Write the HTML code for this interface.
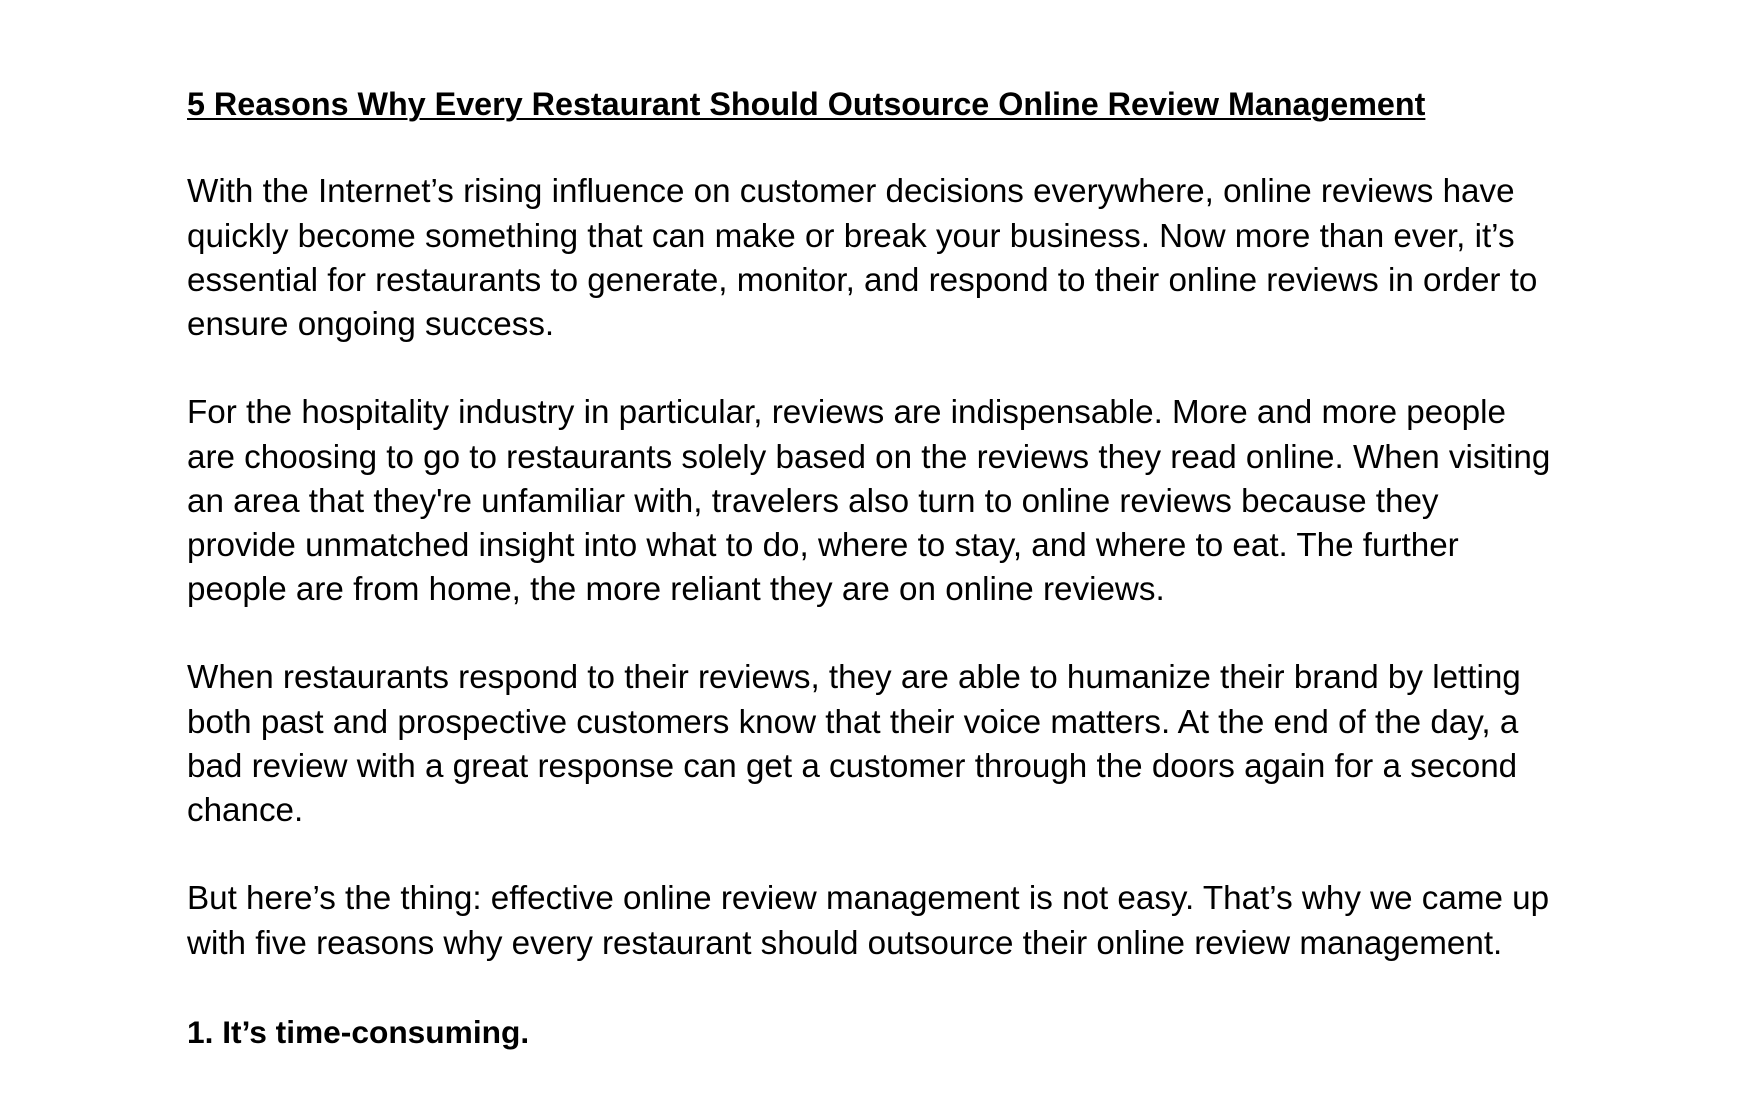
<!DOCTYPE html>
<html><head><meta charset="utf-8"><style>
html,body{margin:0;padding:0;background:#fff;width:1744px;height:1100px;overflow:hidden}
.c{position:absolute;left:187px;top:82px;font-family:"Liberation Sans",sans-serif;font-size:33.2px;line-height:44.2px;color:#000;white-space:nowrap}
.l{height:44.2px}
.t{font-size:32.3px;font-weight:bold;text-decoration:underline;text-decoration-thickness:2px;text-underline-offset:3px}
.b{font-size:31.7px;font-weight:bold}
</style></head><body><div class="c">
<div class="l t">5 Reasons Why Every Restaurant Should Outsource Online Review Management</div>
<div class="l"></div>
<div class="l">With the Internet’s rising influence on customer decisions everywhere, online reviews have</div>
<div class="l">quickly become something that can make or break your business. Now more than ever, it’s</div>
<div class="l">essential for restaurants to generate, monitor, and respond to their online reviews in order to</div>
<div class="l">ensure ongoing success.</div>
<div class="l"></div>
<div class="l">For the hospitality industry in particular, reviews are indispensable. More and more people</div>
<div class="l">are choosing to go to restaurants solely based on the reviews they read online. When visiting</div>
<div class="l">an area that they're unfamiliar with, travelers also turn to online reviews because they</div>
<div class="l">provide unmatched insight into what to do, where to stay, and where to eat. The further</div>
<div class="l">people are from home, the more reliant they are on online reviews.</div>
<div class="l"></div>
<div class="l">When restaurants respond to their reviews, they are able to humanize their brand by letting</div>
<div class="l">both past and prospective customers know that their voice matters. At the end of the day, a</div>
<div class="l">bad review with a great response can get a customer through the doors again for a second</div>
<div class="l">chance.</div>
<div class="l"></div>
<div class="l">But here’s the thing: effective online review management is not easy. That’s why we came up</div>
<div class="l">with five reasons why every restaurant should outsource their online review management.</div>
<div class="l"></div>
<div class="l b">1. It’s time-consuming.</div>
</div></body></html>
